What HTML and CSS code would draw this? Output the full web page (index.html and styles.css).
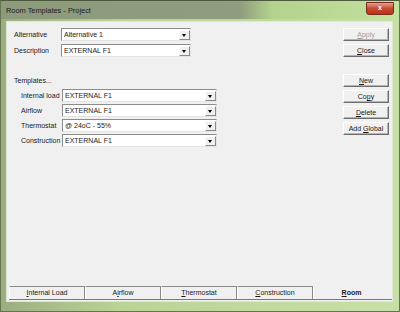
FILE: index.html
```html
<!DOCTYPE html>
<html>
	<head>
		<meta charset="UTF-8">
		<title>Room Templates - Project</title>
		<link rel="stylesheet" href="styles.css">
	</head>
	<body>
		<div class="window">
			<div class="titlebar">
				<span class="title">Room Templates - Project</span>
				<div class="closex">x</div>
			</div>
			<div class="client">
				<div class="main">
					<div class="left">
						<div class="row">
							<span class="lbl">Alternative</span>
							<div class="combo small"><span>Alternative 1</span><i class="drop"></i></div>
						</div>
						<div class="row">
							<span class="lbl">Description</span>
							<div class="combo small"><span>EXTERNAL F1</span><i class="drop"></i></div>
						</div>
						<p class="group">Templates...</p>
						<div class="tpl">
							<div class="row">
								<span class="lbl2">Internal load</span>
								<div class="combo"><span>EXTERNAL F1</span><i class="drop"></i></div>
							</div>
							<div class="row">
								<span class="lbl2">Airflow</span>
								<div class="combo"><span>EXTERNAL F1</span><i class="drop"></i></div>
							</div>
							<div class="row">
								<span class="lbl2">Thermostat</span>
								<div class="combo"><span>@ 24oC - 55%</span><i class="drop"></i></div>
							</div>
							<div class="row">
								<span class="lbl2">Construction</span>
								<div class="combo"><span>EXTERNAL F1</span><i class="drop"></i></div>
							</div>
						</div>
					</div>
					<div class="right">
						<div class="btn disabled"><u>A</u>pply</div>
						<div class="btn"><u>C</u>lose</div>
						<div class="btn gap"><u>N</u>ew</div>
						<div class="btn">Co<u>p</u>y</div>
						<div class="btn"><u>D</u>elete</div>
						<div class="btn">Add <u>G</u>lobal</div>
					</div>
				</div>
				<div class="tabs">
					<div class="tab"><u>I</u>nternal Load</div>
					<div class="tab">A<u>i</u>rflow</div>
					<div class="tab"><u>T</u>hermostat</div>
					<div class="tab"><u>C</u>onstruction</div>
					<div class="tab active"><u>R</u>oom</div>
				</div>
			</div>
		</div>
	</body>
</html>
```

FILE: styles.css
```css
body{
	margin: 0;
	font-family: "Liberation Sans", Arial, sans-serif;
	font-size: 7px;
	color: #1a1a1a;
}
.window{
	width: 400px;
	height: 312px;
	box-sizing: border-box;
	display: flex;
	flex-direction: column;
	background: linear-gradient(to right, #9aae80 0, #b9d496 30%, #c6e0a8 100%);
	border: 1px solid #66744f;
	border-top-color: #4e5a3e;
}
.titlebar{
	height: 18px;
	display: flex;
	align-items: center;
	padding-left: 5px;
	background: linear-gradient(to right, #8d9a7c 0, #8f9c7e 60%, #b3d28c 68%, #c4e2a0 100%);
}
.title{
	font-size: 7.4px;
	color: #1a1a1a;
	margin-top: 1px;
}
.closex{
	margin-left: auto;
	margin-right: 5px;
	width: 28px;
	height: 13px;
	box-sizing: border-box;
	border: 1px solid #7a2a1a;
	border-radius: 0 0 3px 3px;
	background: linear-gradient(#e8a090, #c84a30 50%, #b83418);
	color: #fff;
	font-weight: bold;
	font-size: 7px;
	text-align: center;
	line-height: 10px;
	margin-top: -3px;
}
.client{
	flex: 1;
	margin: 2px 6px 9px 5px;
	background-color: #f0f0f0;
	border: 1px solid #dfe8d4;
	display: flex;
	flex-direction: column;
}
.main{
	display: flex;
	padding-top: 6px;
}
.left{
	flex: 1;
	padding-left: 7px;
}
.row{
	display: flex;
	align-items: center;
	height: 13px;
	margin-bottom: 3px;
}
.lbl{
	width: 47px;
}
.lbl2{
	width: 41px;
}
.tpl{
	padding-left: 7px;
}
.tpl .row{
	margin-bottom: 2px;
}
.group{
	margin: 19px 0 3px 0;
	height: 10px;
	line-height: 10px;
}
.combo{
	width: 155px;
	height: 13px;
	box-sizing: border-box;
	background: #fff;
	border: 1px solid;
	border-color: #8c8c8c #e4e4e4 #e4e4e4 #8c8c8c;
	display: flex;
	align-items: center;
	padding-left: 2px;
}
.combo.small{
	width: 130px;
}
.combo span{
	flex: 1;
}
.drop{
	width: 11px;
	height: 10px;
	box-sizing: border-box;
	background: #f0f0f0;
	border: 1px solid;
	border-color: #fff #8a8a8a #8a8a8a #fff;
	position: relative;
}
.drop:after{
	content: "";
	position: absolute;
	left: 2px;
	top: 3px;
	border-left: 2.5px solid transparent;
	border-right: 2.5px solid transparent;
	border-top: 3px solid #000;
}
.right{
	width: 46px;
	margin-right: 3px;
	display: flex;
	flex-direction: column;
}
.btn{
	height: 13px;
	box-sizing: border-box;
	margin-bottom: 3px;
	border: 1px solid;
	border-color: #fff #6c6c6c #6c6c6c #fff;
	box-shadow: inset -1px -1px 0 #b4b4b4;
	text-align: center;
	line-height: 11px;
}
.btn.gap{
	margin-top: 14px;
}
.btn.disabled{
	color: #a0a0a0;
}
.tabs{
	margin-top: auto;
	margin-left: 2px;
	margin-bottom: 1px;
	display: flex;
	height: 13px;
	border-bottom: 1px solid #7a7a7a;
}
.tab{
	width: 76px;
	box-sizing: border-box;
	border-top: 1px solid #8a8a8a;
	border-left: 1px solid #fff;
	border-right: 1px solid #8a8a8a;
	text-align: center;
	line-height: 11px;
}
.tab.active{
	border-top: none;
	border-right: none;
	font-weight: bold;
	line-height: 14px;
}
```
